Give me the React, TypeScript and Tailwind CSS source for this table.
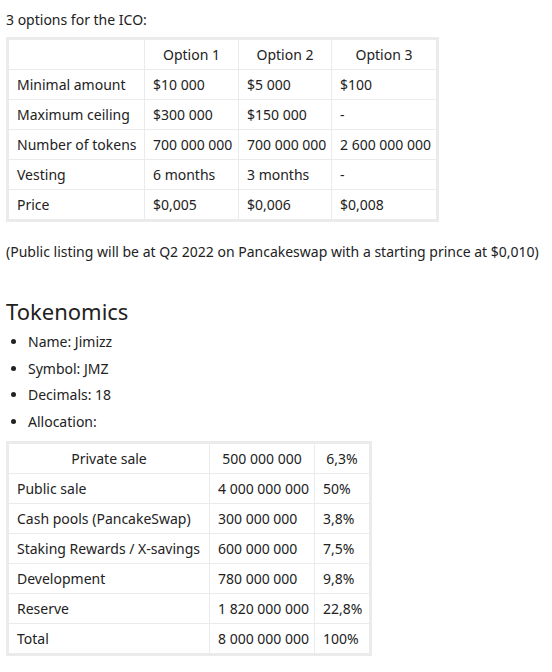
import React from "react";

const opts: string[][] = [
  ["Minimal amount", "$10 000", "$5 000", "$100"],
  ["Maximum ceiling", "$300 000", "$150 000", "-"],
  ["Number of tokens", "700 000 000", "700 000 000", "2 600 000 000"],
  ["Vesting", "6 months", "3 months", "-"],
  ["Price", "$0,005", "$0,006", "$0,008"],
];

const alloc: string[][] = [
  ["Public sale", "4 000 000 000", "50%"],
  ["Cash pools (PancakeSwap)", "300 000 000", "3,8%"],
  ["Staking Rewards / X-savings", "600 000 000", "7,5%"],
  ["Development", "780 000 000", "9,8%"],
  ["Reserve", "1 820 000 000", "22,8%"],
  ["Total", "8 000 000 000", "100%"],
];

const cell = "border border-[#ebebeb] pl-[8px] pr-0 py-[4px] leading-[21px] whitespace-nowrap overflow-visible";
const th = "border border-[#ebebeb] px-0 py-[4px] leading-[21px] whitespace-nowrap font-normal text-center";

export default function App() {
  return (
    <div
      className="bg-white text-[#222] text-[14px] px-[6px] pt-[10px] pb-4 min-h-[672px]"
      style={{ fontFamily: '"Noto Sans", "Open Sans", sans-serif' }}
    >
      <p className="leading-[20px]">3 options for the ICO:</p>
      <table className="mt-[7px] table-fixed w-[433px] border-collapse border-[3px] border-[#ebebeb]">
        <colgroup>
          <col className="w-[137px]" />
          <col className="w-[94px]" />
          <col className="w-[93px]" />
          <col className="w-[106px]" />
        </colgroup>
        <thead>
          <tr>
            <th className={th}></th>
            <th className={th}>Option 1</th>
            <th className={th}>Option 2</th>
            <th className={th}>Option 3</th>
          </tr>
        </thead>
        <tbody>
          {opts.map((r) => (
            <tr key={r[0]}>
              {r.map((c, i) => (
                <td key={i} className={cell}>
                  {c}
                </td>
              ))}
            </tr>
          ))}
        </tbody>
      </table>
      <p className="mt-[20px] leading-[20px] whitespace-nowrap">
        (Public listing will be at Q2 2022 on Pancakeswap with a starting prince at $0,010)
      </p>
      <h2 className="mt-[34px] text-[22px] leading-[30px] font-normal">Tokenomics</h2>
      <ul className="list-disc pl-[22px] leading-[26.5px] mt-[3px]">
        <li>Name: Jimizz</li>
        <li>Symbol: JMZ</li>
        <li>Decimals: 18</li>
        <li>Allocation:</li>
      </ul>
      <table className="mt-[6px] table-fixed w-[366px] border-collapse border-[3px] border-[#ebebeb]">
        <colgroup>
          <col className="w-[202px]" />
          <col className="w-[105px]" />
          <col className="w-[56px]" />
        </colgroup>
        <thead>
          <tr>
            <th className={th}>Private sale</th>
            <th className={th}>500 000 000</th>
            <th className={th}>6,3%</th>
          </tr>
        </thead>
        <tbody>
          {alloc.map((r) => (
            <tr key={r[0]}>
              {r.map((c, i) => (
                <td key={i} className={cell}>
                  {c}
                </td>
              ))}
            </tr>
          ))}
        </tbody>
      </table>
    </div>
  );
}
